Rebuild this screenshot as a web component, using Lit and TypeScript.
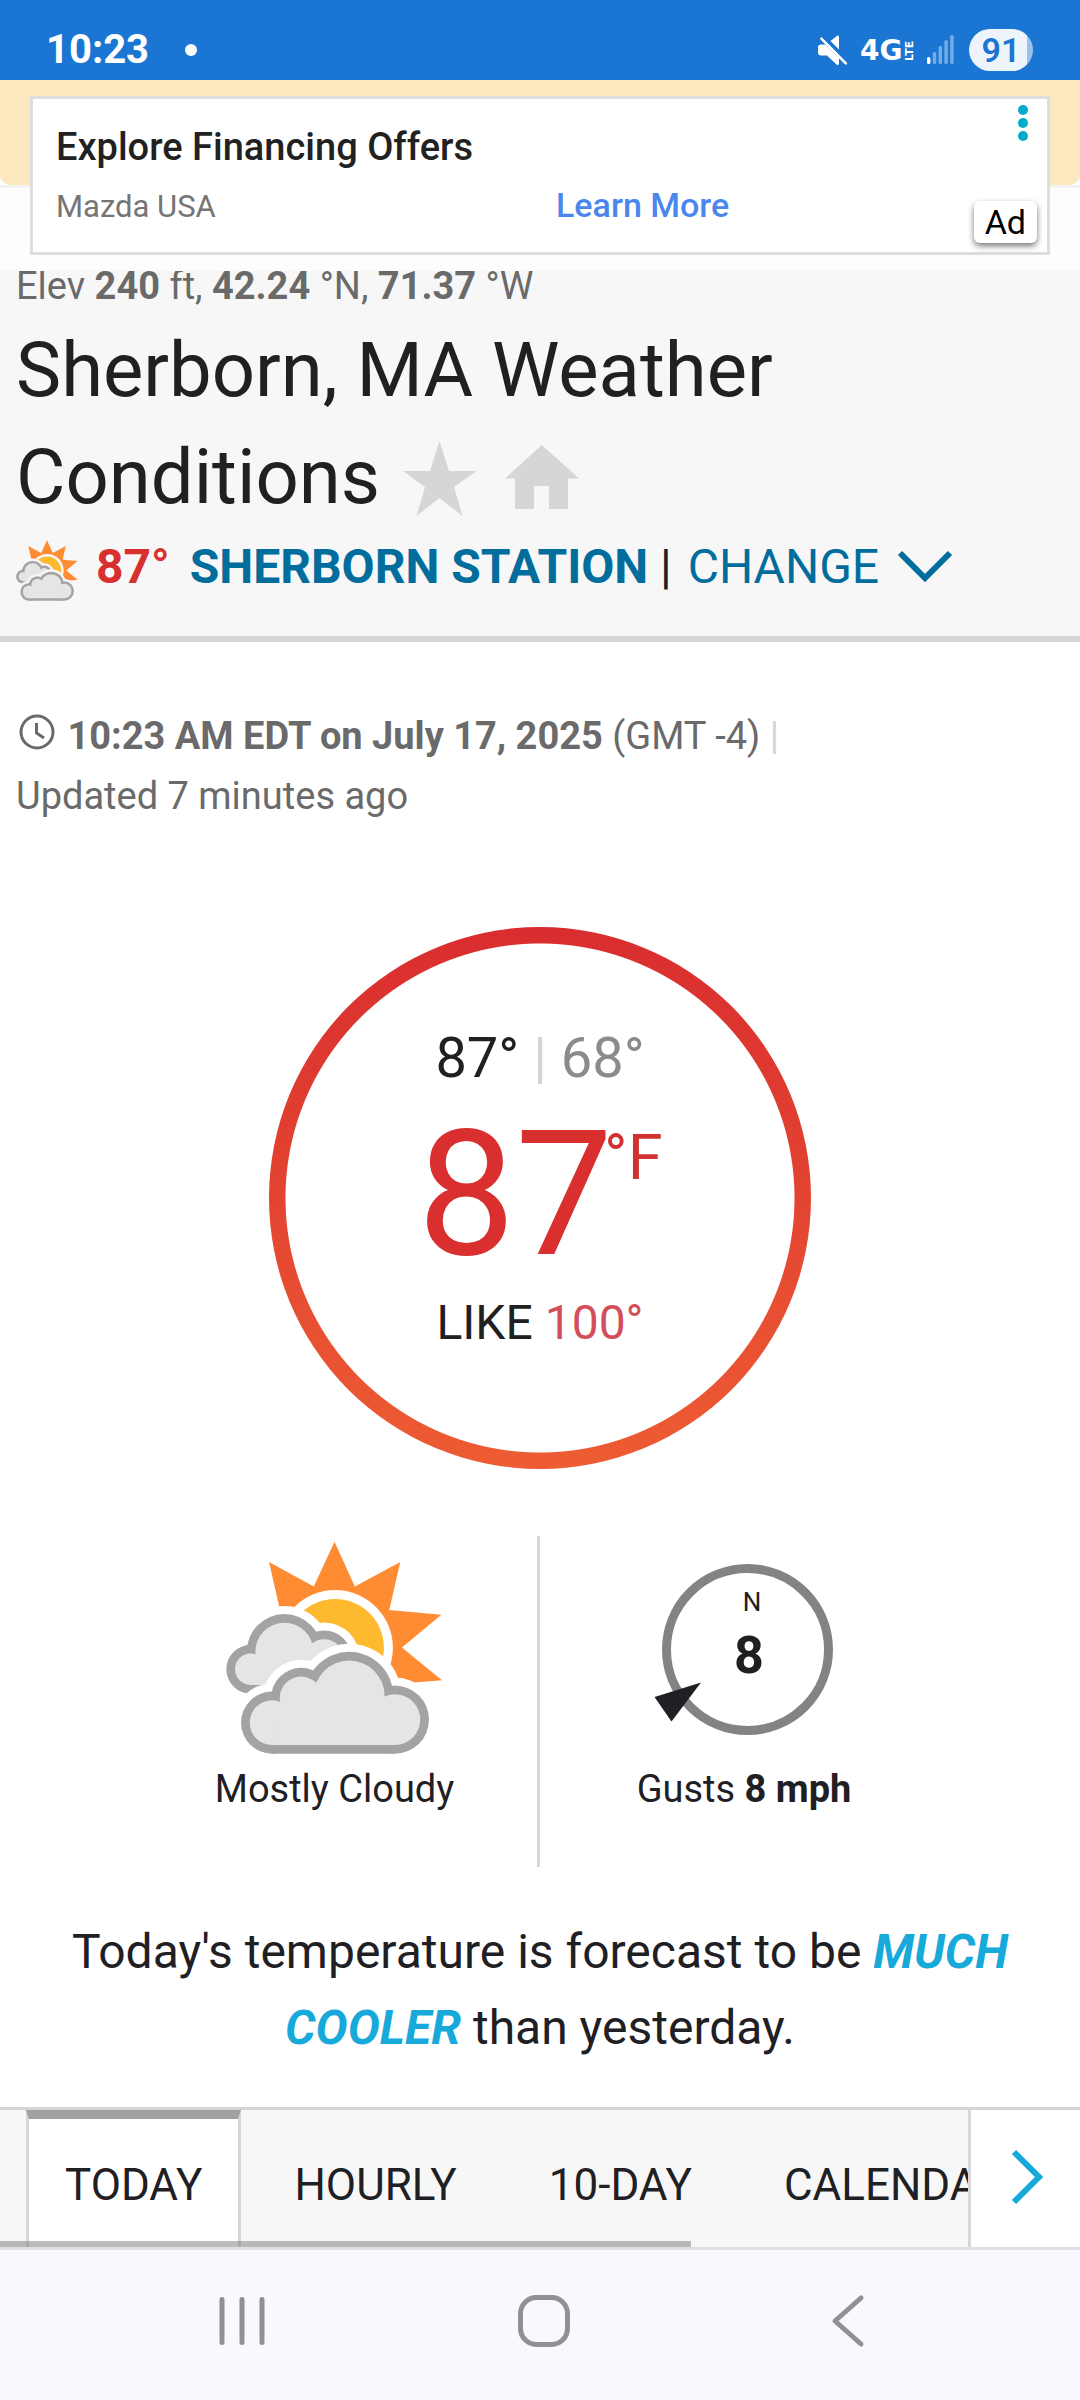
import { LitElement, html, css, svg } from "lit";
import { customElement, property, state } from "lit/decorators.js";

/* Sun behind two clouds; --halo is the colour of the gap round each shape. */
@customElement("weather-icon")
class WeatherIcon extends LitElement {
  static styles = css`
    :host { display: block; }
    svg { display: block; width: 100%; height: auto; }
    .halo { fill: var(--halo, #fff); }
    .ray { fill: #ff8b33; }
    .sun { fill: #ffb92e; }
    .edge { fill: #a3a3a3; }
    .body { fill: #e5e5e5; }
  `;

  private cloud(lobes: number[][], bottom: number) {
    const layer = (name: string, grow: number) => {
      const first = lobes[0];
      const last = lobes[lobes.length - 1];
      const hull = [
        ...lobes.map(([x, y]) => `${x},${y}`),
        `${last[0]},${bottom + grow}`,
        `${first[0]},${bottom + grow}`,
      ].join(" ");
      return svg`<g class=${name}>
        ${lobes.map(([x, y, r]) => svg`<circle cx=${x} cy=${y} r=${r + grow}></circle>`)}
        <polygon points=${hull}></polygon>
      </g>`;
    };
    return svg`${layer("halo", 24)}${layer("edge", 0)}${layer("body", -26)}`;
  }

  render() {
    return html`<svg viewBox="78 63 650 640" aria-hidden="true">
      <polygon class="ray" points="207,126 341,199 403,65 464,199 600,126 567,270 723,284 605,382 725,480 640,487 560,490 405,383 250,315"></polygon>
      <circle class="halo" cx="405" cy="383" r="173"></circle>
      <circle class="sun" cx="405" cy="383" r="146"></circle>
      ${this.cloud([[152, 447, 73], [253, 395, 113], [372, 413, 82]], 520)}
      ${this.cloud([[216, 607, 93], [303, 533, 90], [447, 527, 132], [584, 598, 102]], 700)}
    </svg>`;
  }
}

@customElement("status-bar")
class StatusBar extends LitElement {
  static styles = css`
    :host {
      display: flex;
      align-items: center;
      justify-content: space-between;
      height: 80px;
      box-sizing: border-box;
      padding: 20px 47px 0 46px;
      background: #1b76d3;
      color: #fff;
    }
    .left, .right { display: flex; align-items: center; }
    .time { font-size: 40px; line-height: 40px; font-weight: 700; }
    .dot { width: 12px; height: 12px; margin-left: 36px; border-radius: 50%; background: #fff; }
    svg { display: block; overflow: visible; }
    .net { margin-left: 12px; }
    .signal { margin-left: 12px; }
    .battery {
      margin-left: 14px;
      width: 64px;
      height: 42px;
      border-radius: 21px;
      background: linear-gradient(to right, #edf4fc 91%, #9bc1ea 91%);
      color: #1b75d2;
      font-size: 34px;
      line-height: 42px;
      font-weight: 600;
      text-align: center;
    }
    .big, .tiny { font-family: "DejaVu Sans", sans-serif; font-weight: 700; }
    .big { font-size: 28px; }
    .tiny { font-size: 11px; }
  `;

  render() {
    const bars = [57, 52, 46, 40, 35];
    return html`
      <div class="left">
        <span class="time">10:23</span>
        <span class="dot"></span>
      </div>
      <div class="right">
        <svg width="31" height="32" viewBox="818 33 31 32" fill="#fff" aria-label="Sound muted">
          <path d="M831.5 40 L838.5 34.6 Q840 34 840 36 V48.6 Z"></path>
          <path d="M819 46.5 Q819 43.6 822 43.6 H826.5 L840 57 V62 Q840 65 837.5 63.5 L828 54.6 H822 Q819 54.6 819 51.6 Z"></path>
          <path d="M822.4 37.6 L846.8 62.4" stroke="#fff" stroke-width="2.6" stroke-linecap="round"></path>
        </svg>
        <svg class="net" width="55" height="26" viewBox="861 37 55 26" fill="#fff">
          <text class="big" x="861" y="60">4G</text>
          <text class="tiny" transform="translate(914 61) rotate(-90)">LTE</text>
        </svg>
        <svg class="signal" width="28" height="30" viewBox="927 35 28 30" aria-label="Signal">
          ${bars.map(
            (top, i) => svg`<rect x=${927 + i * 5.8} y=${top} width="3.4" height=${64 - top} rx="1.6"
              fill="#fff" opacity=${i === 0 ? 1 : 0.4}></rect>`
          )}
        </svg>
        <span class="battery">91</span>
      </div>
    `;
  }
}

@customElement("ad-banner")
class AdBanner extends LitElement {
  static styles = css`
    :host {
      display: block;
      position: relative;
      padding: 16px 30px;
      background: linear-gradient(#fff 105px, #f2f2f2 105px, #f2f2f2 108px, #fdfdfd 108px);
    }
    .strip {
      position: absolute;
      inset: 0 0 auto 0;
      height: 105px;
      border-radius: 0 0 10px 10px;
      background: #fee8c0;
    }
    .card {
      position: relative;
      box-sizing: border-box;
      padding: 24px 23px 21px;
      border: 3px solid #ddd;
      background: #fff;
    }
    .title { display: block; font-size: 38px; line-height: 48px; font-weight: 500; color: #212121; text-decoration: none; }
    .row { display: grid; grid-template-columns: 1fr 1fr; align-items: baseline; margin-top: 10px; line-height: 48px; }
    .brand { font-size: 31px; color: #757575; }
    .more { font-size: 34px; font-weight: 500; color: #4a86ec; text-decoration: none; margin-left: 16px; }
    .menu {
      position: absolute;
      top: 3px;
      right: 15px;
      display: grid;
      gap: 3px;
      padding: 3px 4px;
      border: 0;
      background: none;
    }
    .menu i { width: 10px; height: 10px; border-radius: 50%; background: #00acc8; }
    .badge {
      position: absolute;
      right: 10px;
      bottom: 9px;
      padding: 0 11px;
      border-radius: 6px;
      background: #fff;
      box-shadow: 0 3px 6px #0008;
      font-size: 34px;
      line-height: 42px;
      color: #000;
    }
  `;

  render() {
    return html`
      <div class="strip"></div>
      <aside class="card">
        <a class="title" href="#offer">Explore Financing Offers</a>
        <div class="row">
          <span class="brand">Mazda USA</span>
          <a class="more" href="#offer">Learn More</a>
        </div>
        <button class="menu" aria-label="Ad options"><i></i><i></i><i></i></button>
        <span class="badge">Ad</span>
      </aside>
    `;
  }
}

@customElement("station-header")
class StationHeader extends LitElement {
  static styles = css`
    :host {
      display: block;
      padding: 0 16px 33px;
      background: #f7f7f7;
      border-bottom: 6px solid #d6d6d6;
      color: #202020;
    }
    .geo { margin: 0; font-size: 38px; line-height: 30px; color: #6a6a6a; }
    h1 { margin: 16px 0 0; font-size: 76px; line-height: 107px; font-weight: 400; }
    .mark { display: inline-block; width: 74px; height: 76px; margin: 0 22px 0 4px; padding: 0; border: 0; background: none; vertical-align: -14px; }
    .mark + .mark { margin-left: 6px; }
    .mark svg { display: block; fill: #d6d6d6; }
    .station { display: flex; align-items: center; font-size: 48px; line-height: 72px; white-space: pre; }
    .station weather-icon { --halo: #f7f7f7; width: 62px; margin-right: 18px; padding-top: 8px; }
    .temp { color: #d8302f; margin-right: 20px; }
    a, .change { color: #006d9c; text-decoration: none; }
    a { font-weight: 700; }
    .change { display: flex; align-items: center; gap: 18px; margin-left: 4px; padding: 0; border: 0; background: none; font: inherit; }
  `;

  render() {
    return html`
      <p class="geo">Elev <b>240</b> ft, <b>42.24</b> °N, <b>71.37</b> °W</p>
      <h1>
        Sherborn, MA Weather Conditions
        <button class="mark" aria-label="Add to favorites"><svg width="74" height="76" viewBox="403 442 74 76">
          <path d="M439.5 442 L449 472 H476.5 L454 488 L462.5 517 L439.5 499 L416.5 517 L425 488 L403 472 H430 Z"></path>
        </svg></button><button class="mark" aria-label="Set as home"><svg width="74" height="76" viewBox="505 442 74 76">
          <path d="M541.8 446 L579 479.5 H568 V510 H549 V487 H534 V510 H515 V479.5 H505 Z"></path>
        </svg></button>
      </h1>
      <div class="station"><weather-icon></weather-icon><b class="temp">87°</b><a href="#station">SHERBORN STATION</a><span> | </span><button class="change">CHANGE<svg width="56" height="34" viewBox="0 0 56 34" fill="none" stroke="#006d9c" stroke-width="6" aria-hidden="true"><path d="M3 3 L28 28 L53 3"></path></svg></button></div>
    `;
  }
}

@customElement("current-conditions")
class CurrentConditions extends LitElement {
  static styles = css`
    :host { display: block; padding-top: 64px; color: #1f2024; }
    .stamp { margin: 0; padding: 0 16px; font-size: 38px; line-height: 60px; color: #6a6a6a; }
    .stamp svg { vertical-align: -1px; margin-left: 3px; margin-right: 3px; }
    .bar { color: #d4d4d4; }
    .dial {
      display: flex;
      flex-direction: column;
      align-items: center;
      box-sizing: border-box;
      width: 542px;
      height: 542px;
      margin: 101px auto 0;
      padding-top: 97px;
      border-radius: 50%;
      background:
        radial-gradient(closest-side, #fff 254px, transparent 255px),
        linear-gradient(#d92d2f, #ed5c33);
    }
    .range { font-size: 56px; line-height: 68px; }
    .low { color: #8b8b8b; }
    .now { display: flex; margin-top: 16px; font-size: 174px; line-height: 174px; color: #da2f2f; }
    .unit { margin-top: 18px; margin-left: -9px; font-size: 63px; line-height: 64px; color: #d03231; }
    .like { margin-top: 13px; font-size: 48px; line-height: 56px; color: #202020; }
    .feels { color: #d44e5a; }
    .pair { display: grid; grid-template-columns: 1fr 1fr; margin-top: 67px; padding: 0 132px; }
    .cell { display: flex; flex-direction: column; align-items: center; padding: 5px 0 56px; font-size: 38px; line-height: 44px; }
    .cell:first-child { border-right: 3px solid #d6d6d6; }
    .art { display: flex; align-items: center; height: 213px; margin-bottom: 13px; }
    .art weather-icon { width: 217px; }
    .compass { font-size: 26px; fill: #202020; }
    .speed { font-size: 52px; font-weight: 700; }
    .outlook { margin: 47px 0 41px; padding: 0 60px; font-size: 48px; line-height: 76px; text-align: center; }
    .outlook em { font-weight: 700; color: #17a9da; }
  `;

  render() {
    return html`
      <p class="stamp">
        <svg width="36" height="36" viewBox="0 0 36 36" fill="none" stroke="#6a6a6a" stroke-width="3" aria-hidden="true">
          <circle cx="18" cy="18" r="16"></circle>
          <path d="M17.5 9 V19 L25 24"></path>
        </svg>
        <b>10:23 AM EDT on July 17, 2025</b> (GMT -4) <span class="bar">|</span><br />
        Updated 7 minutes ago
      </p>
      <section class="dial">
        <div class="range">87° <span class="bar">|</span> <span class="low">68°</span></div>
        <div class="now">87<span class="unit">°F</span></div>
        <div class="like">LIKE <span class="feels">100°</span></div>
      </section>
      <section class="pair">
        <div class="cell">
          <div class="art"><weather-icon></weather-icon></div>
          <span>Mostly Cloudy</span>
        </div>
        <div class="cell">
          <div class="art">
            <svg width="192" height="212" viewBox="648 1542 192 212">
              <circle cx="747.5" cy="1649.5" r="81" fill="none" stroke="#828483" stroke-width="9"></circle>
              <polygon points="701,1682.5 654.5,1697 671.5,1721.5" fill="#1f2024"></polygon>
              <g class="compass" text-anchor="middle">
                <text x="752" y="1611">N</text>
                <text class="speed" x="749" y="1673">8</text>
              </g>
            </svg>
          </div>
          <span>Gusts <b>8 mph</b></span>
        </div>
      </section>
      <p class="outlook">Today's temperature is forecast to be <em>MUCH COOLER</em> than yesterday.</p>
    `;
  }
}

@customElement("forecast-tabs")
class ForecastTabs extends LitElement {
  @property({ type: Array }) tabs: string[] = ["TODAY", "HOURLY", "10-DAY", "CALENDAR"];
  @state() private current = 0;

  static styles = css`
    :host {
      display: flex;
      position: relative;
      border-top: 3px solid #d5d5d5;
      border-bottom: 3px solid #dfe0e5;
      background: #f7f7f7;
    }
    .list { display: flex; gap: 14px; flex: 1; min-width: 0; overflow: hidden; padding-left: 26px; }
    .tab {
      flex: none;
      padding: 40px 36px 35px;
      border: 3px solid transparent;
      border-top-width: 9px;
      border-bottom: 0;
      background: none;
      font: inherit;
      font-size: 44px;
      line-height: 53px;
      color: #1f2024;
    }
    .tab.on { border-color: #a1a1a1 #d6d6d6; background: #fff; }
    .next {
      display: flex;
      align-items: center;
      justify-content: center;
      flex: none;
      width: 112px;
      padding: 0 0 4px 3px;
      border: 0;
      border-left: 3px solid #d6d6d6;
      background: #fff;
    }
    .thumb { position: absolute; left: 0; bottom: 0; width: 64%; height: 6px; background: #82828288; }
  `;

  render() {
    return html`
      <div class="list" role="tablist">
        ${this.tabs.map(
          (name, i) => html`<button
            class="tab ${i === this.current ? "on" : ""}"
            role="tab"
            aria-selected=${i === this.current}
            @click=${() => (this.current = i)}
          >${name}</button>`
        )}
      </div>
      <button class="next" aria-label="More tabs">
        <svg width="34" height="56" viewBox="0 0 34 56" fill="none" stroke="#17a9da" stroke-width="6">
          <path d="M4 3 L29 28 L4 53"></path>
        </svg>
      </button>
      <div class="thumb"></div>
    `;
  }
}

@customElement("system-nav")
class SystemNav extends LitElement {
  static styles = css`
    :host {
      display: grid;
      grid-template-columns: repeat(3, 1fr);
      flex: 1;
      min-height: 150px;
      box-sizing: border-box;
      padding: 0 83px 8px 91px;
      background: #f9f8fe;
    }
    button { display: flex; align-items: center; justify-content: center; padding: 0; border: 0; background: none; }
    svg { fill: none; stroke: #919096; stroke-width: 5; stroke-linecap: round; stroke-linejoin: round; }
  `;

  render() {
    return html`
      <button aria-label="Recent apps">
        <svg width="54" height="54" viewBox="0 0 54 54"><path d="M7 5.5 V48.5 M27 5.5 V48.5 M47 5.5 V48.5"></path></svg>
      </button>
      <button aria-label="Home">
        <svg width="54" height="54" viewBox="0 0 54 54"><rect x="3.5" y="3.5" width="47" height="47" rx="16"></rect></svg>
      </button>
      <button aria-label="Back">
        <svg width="54" height="54" viewBox="0 0 54 54"><path d="M42 4 L16 27 L42 50"></path></svg>
      </button>
    `;
  }
}

@customElement("app-root")
class AppRoot extends LitElement {
  static styles = css`
    :host {
      display: flex;
      flex-direction: column;
      min-height: 100vh;
      background: #fff;
      font-family: Roboto, "Liberation Sans", sans-serif;
    }
  `;

  render() {
    return html`
      <status-bar></status-bar>
      <ad-banner></ad-banner>
      <station-header></station-header>
      <current-conditions></current-conditions>
      <forecast-tabs></forecast-tabs>
      <system-nav></system-nav>
    `;
  }
}
